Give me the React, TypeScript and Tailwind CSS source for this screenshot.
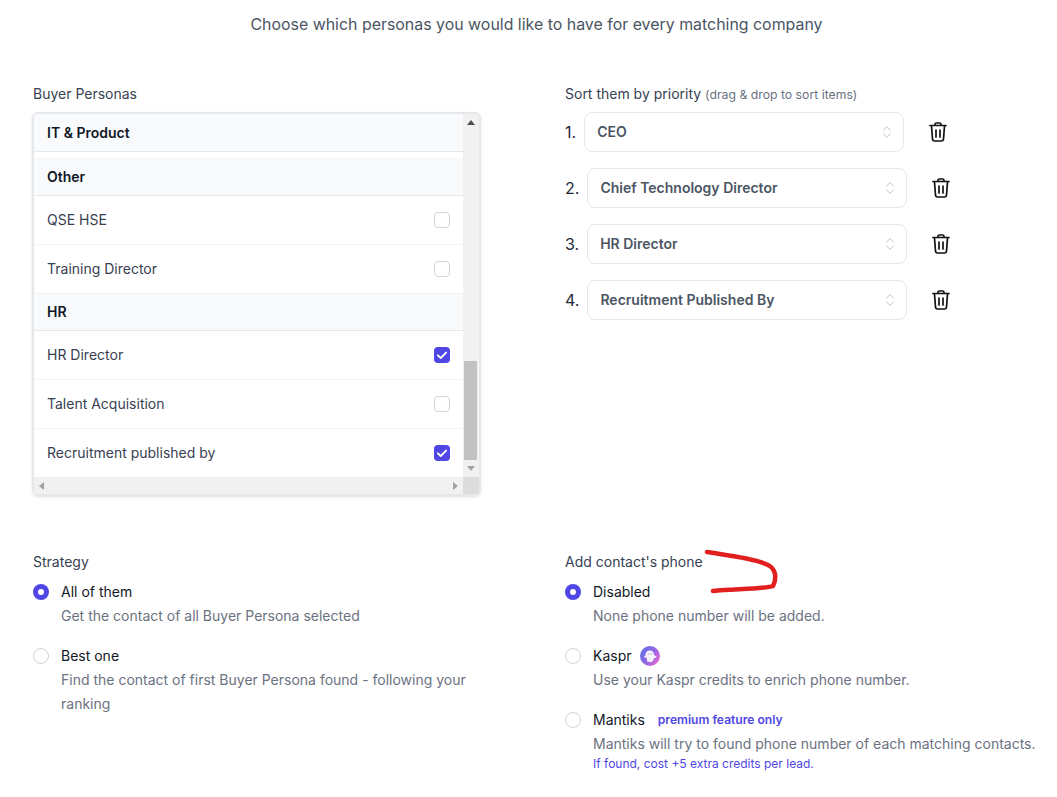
import React from "react";
import { ChevronsUpDown } from "lucide-react";

function Check({ on }: { on?: boolean }) {
  return on ? (
    <span className="flex h-4 w-4 items-center justify-center rounded-[4px] bg-[#4f46e5]">
      <svg width="12" height="12" viewBox="0 0 16 16" fill="none">
        <path d="M2.5 8.5 L6.3 12 L13.5 4.8" stroke="white" strokeWidth="2.6" strokeLinecap="round" strokeLinejoin="round" />
      </svg>
    </span>
  ) : (
    <span className="h-4 w-4 rounded-[4px] border border-[#d1d5db] bg-white" />
  );
}

function Group({ label, top, short }: { label: string; top?: boolean; short?: boolean }) {
  return (
    <div className={`flex items-center border-b border-[#e5e7eb] bg-[#f9fafb] pl-[13px] text-sm font-semibold text-[#111827] ${short ? "h-[37px]" : "h-[38px]"} ${top || short ? "" : "border-t border-t-[#f3f4f6]"}`}>
      {label}
    </div>
  );
}

function Row({ label, on, last }: { label: string; on?: boolean; last?: boolean }) {
  return (
    <div className={`flex items-center justify-between bg-white pl-[13px] pr-[13px] text-sm text-[#374151] ${last ? "h-[48px]" : "h-[49px] border-b border-[#f3f4f6]"}`}>
      <span>{label}</span>
      <Check on={on} />
    </div>
  );
}

function Trash() {
  return (
    <svg width="24" height="24" viewBox="0 0 24 24" fill="none" stroke="#111111" strokeWidth="1.7" strokeLinecap="round" strokeLinejoin="round" className="ml-[22px] shrink-0">
      <path d="M9 5 V4.5 Q9 3 10.5 3 H13.5 Q15 3 15 4.5 V5" />
      <path d="M4 5.5 H20" />
      <path d="M5.5 6 L6.5 19 Q6.7 21 8.5 21 H15.5 Q17.3 21 17.5 19 L18.5 6" />
      <path d="M10 10 V17" />
      <path d="M14 10 V17" />
    </svg>
  );
}

function Sort({ n, label }: { n: number; label: string }) {
  return (
    <div className="flex h-10 items-center">
      <span className="mr-2 text-base text-[#1f2937]">{n}.</span>
      <div className="flex h-10 w-80 items-center justify-between rounded-lg border border-[#e5e7eb] bg-white pl-3 pr-2 text-sm font-semibold text-[#4b5563]">
        <span>{label}</span>
        <ChevronsUpDown size={16} className="text-[#b6bcc6]" strokeWidth={1.4} />
      </div>
      <Trash />
    </div>
  );
}

function Radio({ on }: { on?: boolean }) {
  return on ? (
    <span className="flex h-4 w-4 shrink-0 items-center justify-center rounded-full bg-[#4f46e5]">
      <span className="h-1.5 w-1.5 rounded-full bg-white" />
    </span>
  ) : (
    <span className="h-4 w-4 shrink-0 rounded-full border border-[#d1d5db] bg-white" />
  );
}

function Option({ on, title, extra, children, className }: { on?: boolean; title: string; extra?: React.ReactNode; children: React.ReactNode; className?: string }) {
  return (
    <div className={`flex gap-3 ${className ?? ""}`}>
      <div className="flex h-5 items-center"><Radio on={on} /></div>
      <div className="min-w-0">
        <div className="flex h-5 items-center text-sm font-normal text-[#111827]">{title}{extra}</div>
        <div className="mt-[2px] text-sm leading-6 text-[#6b7280]">{children}</div>
      </div>
    </div>
  );
}

function Ghost() {
  return (
    <svg width="20" height="20" viewBox="0 0 20 20" className="ml-2">
      <defs>
        <linearGradient id="kg" x1="0" y1="0.2" x2="1" y2="0.8">
          <stop offset="0" stopColor="#5f6fe6" />
          <stop offset="0.55" stopColor="#9a67e4" />
          <stop offset="1" stopColor="#e765cf" />
        </linearGradient>
      </defs>
      <circle cx="10" cy="10" r="10" fill="url(#kg)" />
      <path d="M5.5 9.5 C5.5 6 7.5 4.5 9.8 4.5 C12.5 4.5 14 6.5 14 9 L16.5 10.5 C16 12 15 12.3 14 12 C13.8 14 12.5 16 10.5 16.3 C9.5 15.6 8.5 15.6 7.5 16 C7 14.5 6.7 13 6.6 11.5 C5.5 12 4.5 11.5 3.8 10.8 Z" fill="#f4f1fb" />
      <circle cx="8.8" cy="8" r="0.6" fill="#77769a" />
      <circle cx="11.4" cy="8" r="0.6" fill="#77769a" />
    </svg>
  );
}

export default function App() {
  return (
    <div className="relative h-[797px] w-[1057px] overflow-hidden bg-white font-['Inter',sans-serif]">
      <div className="pt-[15px] pl-[16px] text-center text-[15.92px] leading-5 text-[#4b5563]">
        Choose which personas you would like to have for every matching company
      </div>

      <div className="mt-[49px] flex pl-8">
        <div className="w-[449px]">
          <div className="pl-px text-sm leading-5 text-[#374151]">Buyer Personas</div>
          <div className="mt-2 rounded-md border-2 border-[#e5e7eb] shadow-sm">
            <div className="flex">
              <div className="w-[429px]">
                <Group label="IT & Product" top />
                <div className="h-[6px] bg-white" />
                <Group label="Other" />
                <Row label="QSE HSE" />
                <Row label="Training Director" />
                <Group label="HR" short />
                <Row label="HR Director" on />
                <Row label="Talent Acquisition" />
                <Row label="Recruitment published by" on last />
              </div>
              <div className="flex w-4 flex-col bg-[#f1f1f1] pr-px">
                <div className="flex h-[17px] items-center justify-center">
                  <div className="h-0 w-0 border-x-[4px] border-b-[5px] border-x-transparent border-b-[#505050]" />
                </div>
                <div className="flex-1" />
                <div className="mx-auto h-[99px] w-[13px] bg-[#c1c1c1]" />
                <div className="flex h-[17px] items-center justify-center">
                  <div className="h-0 w-0 border-x-[4px] border-t-[5px] border-x-transparent border-t-[#a3a3a3]" />
                </div>
              </div>
            </div>
            <div className="flex h-[17px]">
              <div className="flex w-[429px] items-center justify-between bg-[#f1f1f1] px-[5px]">
                <div className="h-0 w-0 border-y-[4px] border-r-[5px] border-y-transparent border-r-[#a3a3a3]" />
                <div className="h-0 w-0 border-y-[4px] border-l-[5px] border-y-transparent border-l-[#a3a3a3]" />
              </div>
              <div className="w-4 bg-[#dcdcdc]" />
            </div>
          </div>
        </div>

        <div className="ml-[84px]">
          <div className="text-sm leading-5 text-[#374151]">
            Sort them by priority <span className="text-[12.25px] leading-none text-[#6b7280]">(drag &amp; drop to sort items)</span>
          </div>
          <div className="mt-2 flex flex-col gap-4">
            <Sort n={1} label="CEO" />
            <Sort n={2} label="Chief Technology Director" />
            <Sort n={3} label="HR Director" />
            <Sort n={4} label="Recruitment Published By" />
          </div>
        </div>
      </div>

      <div className="mt-[56px] flex pl-[33px]">
        <div className="w-[448px]">
          <div className="text-sm leading-5 text-[#374151]">Strategy</div>
          <Option on title="All of them" className="mt-[10px]">Get the contact of all Buyer Persona selected</Option>
          <Option title="Best one" className="mt-[18px]">Find the contact of first Buyer Persona found - following your<br />ranking</Option>
        </div>
        <div className="ml-[84px]">
          <div className="text-sm leading-5 text-[#374151]">Add contact's phone</div>
          <Option on title="Disabled" className="mt-[10px]">None phone number will be added.</Option>
          <Option title="Kaspr" extra={<Ghost />} className="mt-[18px]">Use your Kaspr credits to enrich phone number.</Option>
          <Option title="Mantiks" extra={<span className="ml-[13px] text-[12.1px] font-semibold text-[#4f46e5]">premium feature only</span>} className="mt-[18px]">
            <div className="whitespace-nowrap">Mantiks will try to found phone number of each matching contacts.</div>
            <div className="text-xs leading-[15px] text-[#4f46e5]">If found, cost +5 extra credits per lead.</div>
          </Option>
        </div>
      </div>

      <svg className="absolute left-0 top-0" width="1057" height="797" fill="none">
        <path d="M707 552 C 725 555, 755 558, 768 565 C 776 569, 777 578, 773 586 C 765 589, 735 589, 713 591" stroke="#e21f1f" strokeWidth="4.5" strokeLinecap="round" strokeLinejoin="round" />
      </svg>
    </div>
  );
}
